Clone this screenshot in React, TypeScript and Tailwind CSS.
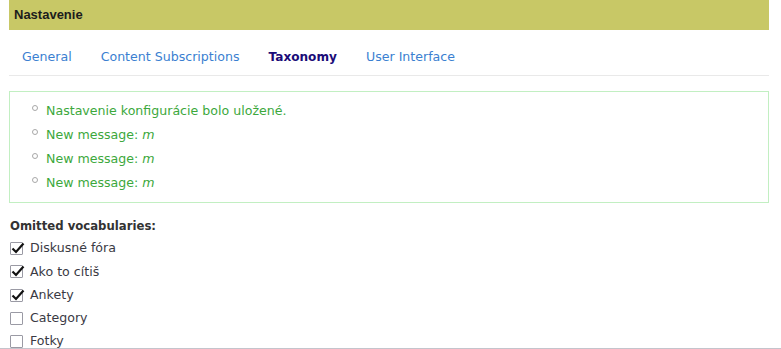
import React from "react";

const tabs = [
  { label: "General", active: false },
  { label: "Content Subscriptions", active: false },
  { label: "Taxonomy", active: true },
  { label: "User Interface", active: false },
];

const messages: React.ReactNode[] = [
  <>Nastavenie konfigurácie bolo uložené.</>,
  <>New message: <em>m</em></>,
  <>New message: <em>m</em></>,
  <>New message: <em>m</em></>,
];

const vocabs = [
  { label: "Diskusné fóra", checked: true },
  { label: "Ako to cítiš", checked: true },
  { label: "Ankety", checked: true },
  { label: "Category", checked: false },
  { label: "Fotky", checked: false },
];

function Box({ checked }: { checked: boolean }) {
  return (
    <span className="relative inline-block w-[13px] h-[13px] border border-[#9a9aa4] bg-white shrink-0 rounded-[1px]">
      {checked && (
        <svg className="absolute left-[0px] top-[-2px]" width="14" height="14" viewBox="0 0 14 14">
          <path d="M1.5 7.5 L5 11 L12.5 2.5" fill="none" stroke="#111" strokeWidth="2.2" />
        </svg>
      )}
    </span>
  );
}

export default function App() {
  return (
    <div className="w-[781px] h-[349px] overflow-hidden bg-white border-b border-[#c4c4cc] font-['DejaVu_Sans',sans-serif] text-[12.6px]">
      <div className="ml-[9px] w-[760px]">
        <div className="h-[30px] bg-[#c8c866] flex items-center pl-[5px]">
          <span className="font-['Liberation_Sans',Arial,sans-serif] font-bold text-[13px] text-[#1c1c1c]">Nastavenie</span>
        </div>
        <div className="flex border-b border-[#e9e9e9] pt-[17px] pb-[8px] pl-[13px] gap-[29px]">
          {tabs.map((t) => (
            <span
              key={t.label}
              className={
                t.active
                  ? "leading-[20px] font-bold text-[12.1px] text-[#1a0c78]"
                  : "leading-[20px] text-[#3b7fd1]"
              }
            >
              {t.label}
            </span>
          ))}
        </div>
        <div className="mt-[15px] border border-[#c2efc2] pt-[7px] pb-[7px]">
          {messages.map((m, i) => (
            <div key={i} className="flex items-center h-[24px] pl-[22px] text-[#3ca83c]">
              <span className="inline-block w-[6px] h-[6px] rounded-full border border-[#a8a8a8] mr-[8px] mt-[-6px]" />
              <span>{m}</span>
            </div>
          ))}
        </div>
        <div className="mt-[13px] pl-[1px] leading-[20px] font-bold text-[11.7px] text-[#333]">Omitted vocabularies:</div>
        <div className="pl-[1px] mt-[1px]">
          {vocabs.map((v) => (
            <div key={v.label} className="flex items-center h-[23.3px] gap-[7px] text-[#3a3a44]">
              <Box checked={v.checked} />
              <span>{v.label}</span>
            </div>
          ))}
        </div>
      </div>
    </div>
  );
}
